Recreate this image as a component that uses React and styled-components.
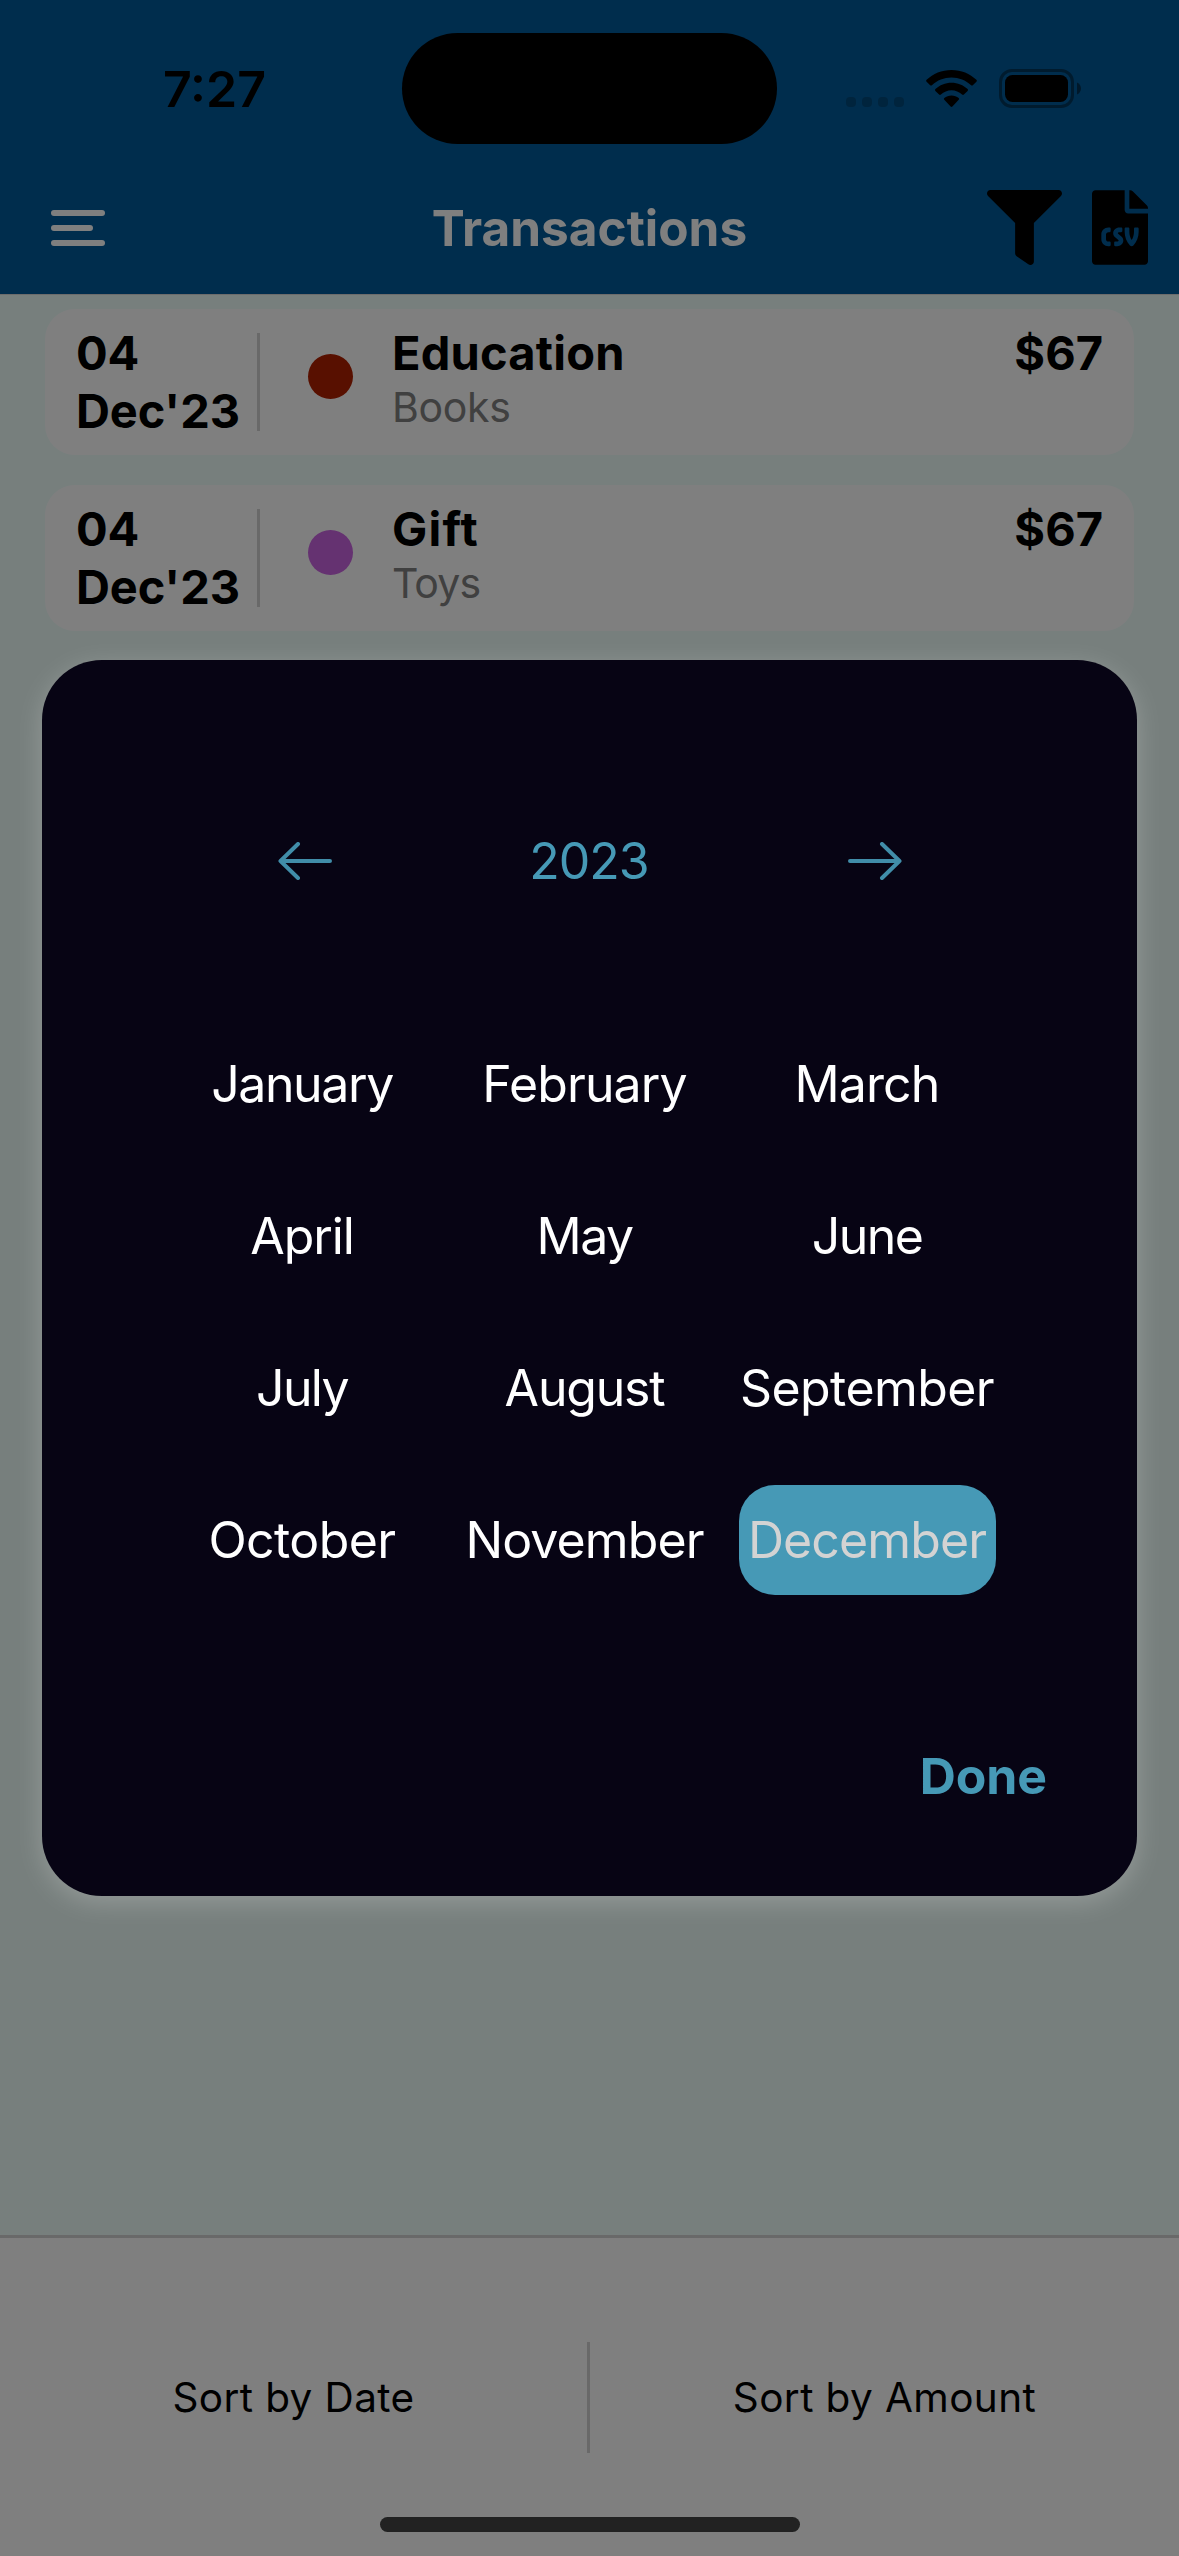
import React, { useState } from "react";
import styled, { createGlobalStyle } from "styled-components";
import { FaFilter, FaFileCsv } from "react-icons/fa";

const GlobalStyle = createGlobalStyle`
  *, *::before, *::after { box-sizing: border-box; }
  html, body { margin: 0; padding: 0; }
  body {
    font-family: Inter, "Liberation Sans", sans-serif;
    color: #000;
  }
  button {
    font: inherit;
    color: inherit;
    background: none;
    border: 0;
    padding: 0;
    margin: 0;
    letter-spacing: inherit;
  }
`;

const Screen = styled.div`
  position: relative;
  display: flex;
  flex-direction: column;
  width: 1179px;
  height: 2556px;
  overflow: hidden;
  background: #eefffb;
`;

const Header = styled.header`
  height: 295px;
  background: #005a9a;
  border-bottom: 1px solid #d8d8d8;
`;

const StatusBar = styled.div`
  display: grid;
  grid-template-columns: 402px 375px 402px;
  align-items: center;
  height: 177px;
`;

const Time = styled.span`
  padding-left: 163px;
  font-size: 50px;
  font-weight: 600;
  line-height: 60px;
`;

const Island = styled.div`
  height: 111px;
  border-radius: 56px;
  background: #000;
`;

const StatusIcons = styled.div`
  display: flex;
  align-items: center;
  padding-left: 69px;
`;

const SignalDots = styled.div`
  display: flex;
  gap: 6px;
  margin: 27px 22px 0 0;
`;

const SignalDot = styled.i`
  width: 10px;
  height: 10px;
  border-radius: 4px;
  background: rgba(0, 0, 0, 0.2);
`;

const Toolbar = styled.div`
  display: grid;
  grid-template-columns: 1fr auto 1fr;
  align-items: center;
  height: 102px;
  padding: 0 31px 0 51px;
`;

const MenuButton = styled.button`
  display: flex;
  flex-direction: column;
  gap: 9px;
`;

const MenuBar = styled.i`
  width: ${(p) => (p.$short ? 42 : 54)}px;
  height: 6px;
  border-radius: 3px;
  background: #fff;
`;

const Title = styled.h1`
  margin: 0 0 0 -20px;
  font-size: 49.5px;
  font-weight: 700;
  line-height: 60px;
  color: #fff;
`;

const Actions = styled.div`
  display: flex;
  justify-content: flex-end;
  gap: 30px;
  margin-top: -1px;
  font-size: 75px;

  svg { display: block; }
`;

const List = styled.main`
  display: flex;
  flex: 1;
  flex-direction: column;
  gap: 30px;
  padding: 14px 45px 0;
`;

const Card = styled.article`
  display: flex;
  align-items: flex-start;
  height: 146px;
  padding: 15px 31px 0 31px;
  border-radius: 30px;
  background: #fff;
`;

const CardDate = styled.div`
  width: 181px;
  font-size: 47px;
  font-weight: 700;
  line-height: 58px;
  letter-spacing: -0.1px;
`;

const CardRule = styled.div`
  width: 3px;
  height: 98px;
  margin-top: 9px;
  background: #d3d3d3;
`;

const CategoryDot = styled.div`
  width: 45px;
  height: 45px;
  margin: 30px 39px 0 48px;
  border-radius: 50%;
  background: ${(p) => p.$color};
`;

const CardText = styled.div`
  flex: 1;
`;

const Category = styled.div`
  font-size: 47px;
  font-weight: 700;
  line-height: 58px;
  letter-spacing: ${(p) => p.$track || 0}px;
`;

const Note = styled.div`
  font-size: 41px;
  line-height: 50px;
  letter-spacing: ${(p) => p.$track}px;
  color: #808080;
`;

const Footer = styled.footer`
  display: grid;
  grid-template-columns: 587px 3px 1fr;
  align-items: start;
  height: 321px;
  padding-top: 104px;
  border-top: 3px solid #d3d3d3;
  background: #fff;
`;

const SortButton = styled.button`
  height: 111px;
  font-size: 40.5px;
  line-height: 111px;
  letter-spacing: 0.4px;
`;

const FooterRule = styled.div`
  height: 111px;
  background: #d3d3d3;
`;

const HomeIndicator = styled.div`
  position: absolute;
  left: 380px;
  bottom: 24px;
  width: 420px;
  height: 15px;
  border-radius: 8px;
  background: #444;
`;

const Backdrop = styled.div`
  position: absolute;
  inset: 0;
  display: flex;
  align-items: center;
  justify-content: center;
  background: rgba(0, 0, 0, 0.5);
`;

const Dialog = styled.section`
  width: 1095px;
  height: 1236px;
  border-radius: 60px;
  background: #070414;
  box-shadow: 0 6px 26px rgba(255, 255, 255, 0.22);
`;

const YearRow = styled.div`
  display: flex;
  align-items: center;
  justify-content: space-between;
  padding: 171px 235px 0 236px;
  color: #4699b6;
  font-size: 50px;
  line-height: 60px;
`;

const ArrowButton = styled.button`
  width: 54px;
  height: 40px;
  opacity: 0.92;

  svg { display: block; }
`;

const Year = styled.span`
  margin-right: 2px;
  letter-spacing: -1px;
`;

const MonthGrid = styled.div`
  display: grid;
  grid-template-columns: repeat(3, 257px);
  grid-auto-rows: 110px;
  gap: 42px 25.5px;
  padding: 138px 0 0 132px;
`;

const Month = styled.button`
  padding-right: 1px;
  border-radius: 36px;
  font-size: 50px;
  line-height: 110px;
  letter-spacing: ${(p) => p.$track}px;
  white-space: nowrap;
  color: ${(p) => (p.$active ? "#d3d3d3" : "#fff")};
  background: ${(p) => (p.$active ? "#4699b6" : "transparent")};
`;

const DialogFooter = styled.div`
  display: flex;
  justify-content: flex-end;
  padding: 151px 90px 0 0;
`;

const DoneButton = styled.button`
  font-size: 50px;
  font-weight: 700;
  line-height: 60px;
  letter-spacing: -0.1px;
  color: #4699b6;
`;

const transactions = [
  { day: "04", month: "Dec'23", category: "Education", track: 0.2, note: "Books", noteTrack: -0.3, amount: "$67", color: "#b02000" },
  { day: "04", month: "Dec'23", category: "Gift", track: 1.2, note: "Toys", noteTrack: -0.9, amount: "$67", color: "#ca64e2" },
];

const months = [
  ["January", -1.4],
  ["February", -0.9],
  ["March", -0.9],
  ["April", -1.1],
  ["May", -1.6],
  ["June", -1.6],
  ["July", -1.7],
  ["August", -1.2],
  ["September", -0.6],
  ["October", -0.6],
  ["November", -0.9],
  ["December", -0.9],
];

function WifiIcon() {
  return (
    <svg width="51" height="38" viewBox="0 0 51 38">
      <path d="M25.5 0C35.2 0 44 3.700 50.400 9.800Q51.300 10.800 50.400 11.700L46.800 15.200Q46 16 45.100 15.200C39.800 10.400 33 7.600 25.500 7.600S11.200 10.400 5.900 15.200Q5 16 4.200 15.200L0.600 11.700Q-0.300 10.800 0.600 9.800C7 3.700 15.800 0 25.500 0Z" />
      <path d="M25.500 12.700C31.700 12.700 37.300 15.100 41.600 19Q42.500 20 41.600 20.900L37.900 24.500Q37 25.300 36.100 24.500C33.200 21.900 29.500 20.300 25.500 20.300S17.800 21.900 14.900 24.500Q14 25.300 13.100 24.500L9.400 20.900Q8.500 20 9.400 19C13.700 15.100 19.300 12.700 25.500 12.700Z" />
      <path d="M25.500 25.500C28.200 25.500 30.700 26.400 32.700 28Q33.600 28.900 32.700 29.800L26.400 36.600Q25.500 37.400 24.600 36.600L18.300 29.800Q17.400 28.900 18.300 28C20.300 26.400 22.800 25.500 25.500 25.500Z" />
    </svg>
  );
}

const BatterySvg = styled.svg`
  margin-left: 22px;
`;

function BatteryIcon() {
  return (
    <BatterySvg width="82" height="39" viewBox="0 0 82 39">
      <rect x="1.500" y="1.500" width="72" height="36" rx="11.500" fill="none" stroke="#000" strokeOpacity="0.4" strokeWidth="3" />
      <rect x="6" y="6" width="63" height="27" rx="7.500" />
      <path d="M78 13.500C80.600 14.500 82 17 82 19.500S80.600 24.500 78 25.500Z" fillOpacity="0.45" />
    </BatterySvg>
  );
}

function ArrowIcon({ flip }) {
  return (
    <svg width="54" height="40" viewBox="0 0 54 40">
      <path
        d={flip ? "M34 3L51.500 20L34 37M51.500 20H2" : "M20 3L2.500 20L20 37M2.500 20H52"}
        fill="none"
        stroke="currentColor"
        strokeWidth="4"
        strokeLinecap="round"
        strokeLinejoin="round"
      />
    </svg>
  );
}

const CsvIcon = styled(FaFileCsv)`
  width: 56px;
`;

export default function App() {
  const [selected, setSelected] = useState("December");

  return (
    <>
      <GlobalStyle />
      <Screen>
        <Header>
          <StatusBar>
            <Time>7:27</Time>
            <Island />
            <StatusIcons>
              <SignalDots>
                <SignalDot />
                <SignalDot />
                <SignalDot />
                <SignalDot />
              </SignalDots>
              <WifiIcon />
              <BatteryIcon />
            </StatusIcons>
          </StatusBar>
          <Toolbar>
            <MenuButton aria-label="Menu">
              <MenuBar />
              <MenuBar $short />
              <MenuBar />
            </MenuButton>
            <Title>Transactions</Title>
            <Actions>
              <FaFilter />
              <CsvIcon />
            </Actions>
          </Toolbar>
        </Header>

        <List>
          {transactions.map((t) => (
            <Card key={t.category}>
              <CardDate>
                {t.day}
                <br />
                {t.month}
              </CardDate>
              <CardRule />
              <CategoryDot $color={t.color} />
              <CardText>
                <Category $track={t.track}>{t.category}</Category>
                <Note $track={t.noteTrack}>{t.note}</Note>
              </CardText>
              <Category>{t.amount}</Category>
            </Card>
          ))}
        </List>

        <Footer>
          <SortButton>Sort by Date</SortButton>
          <FooterRule />
          <SortButton>Sort by Amount</SortButton>
        </Footer>
        <HomeIndicator />

        <Backdrop>
          <Dialog>
            <YearRow>
              <ArrowButton aria-label="Previous year">
                <ArrowIcon />
              </ArrowButton>
              <Year>2023</Year>
              <ArrowButton aria-label="Next year">
                <ArrowIcon flip />
              </ArrowButton>
            </YearRow>
            <MonthGrid>
              {months.map(([name, track]) => (
                <Month key={name} $track={track} $active={name === selected} onClick={() => setSelected(name)}>
                  {name}
                </Month>
              ))}
            </MonthGrid>
            <DialogFooter>
              <DoneButton>Done</DoneButton>
            </DialogFooter>
          </Dialog>
        </Backdrop>
      </Screen>
    </>
  );
}
